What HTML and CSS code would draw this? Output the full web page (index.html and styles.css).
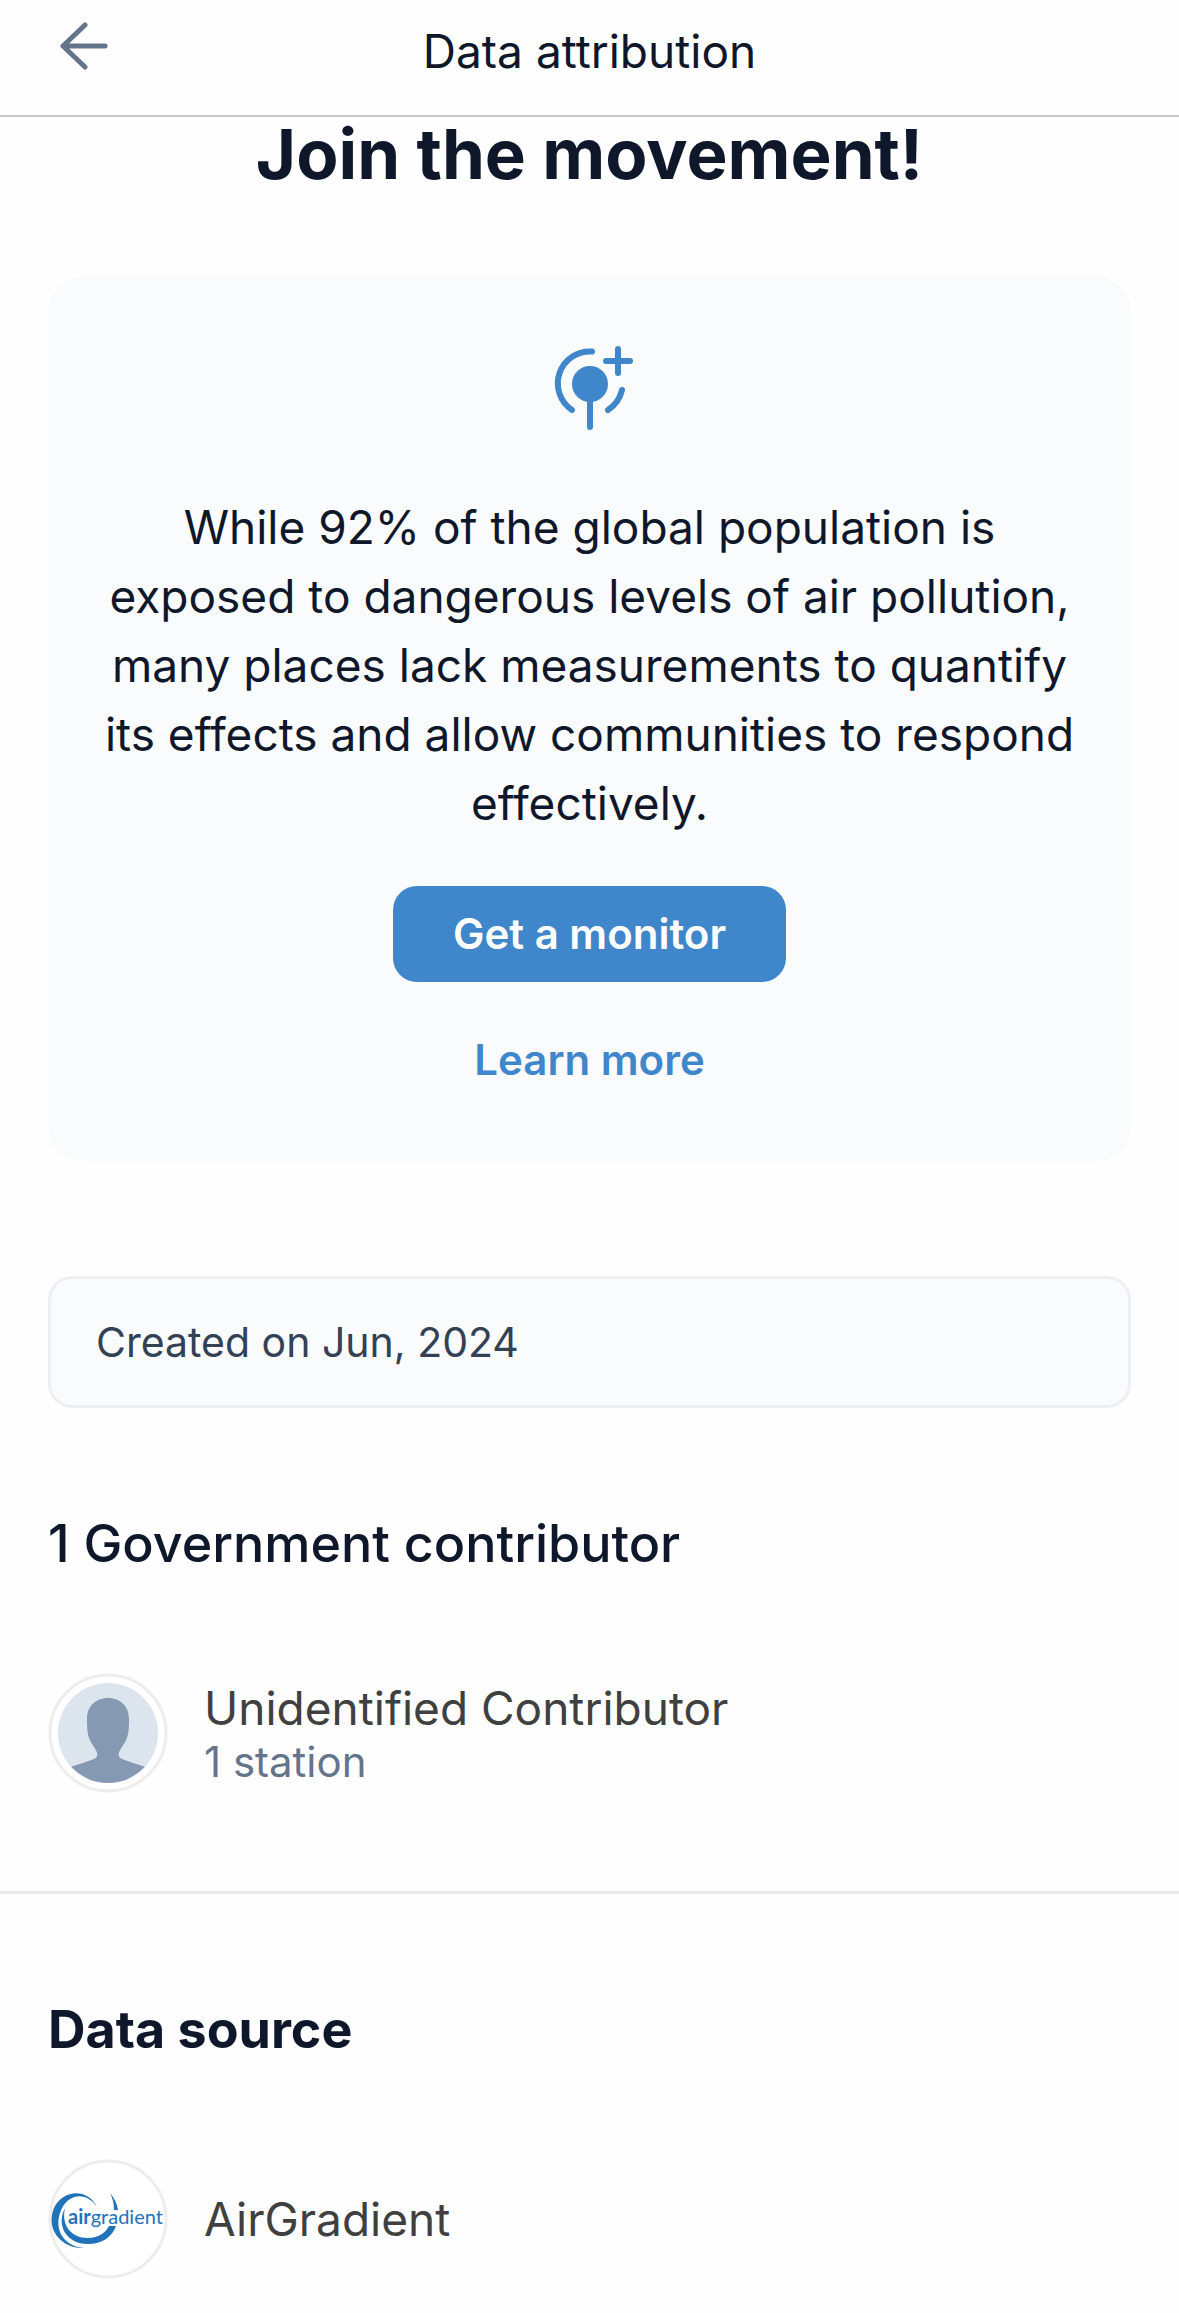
FILE: index.html
```html
<!DOCTYPE html>
<html lang="en">
<head>
<meta charset="utf-8">
<meta name="viewport" content="width=device-width">
<title>Data attribution</title>
<link rel="stylesheet" href="styles.css">
</head>
<body>
<header class="topbar">
  <button class="back" type="button" aria-label="Back">
    <svg viewBox="0 0 48 48" width="48" height="48"><path d="M25 3 3 24l22 21M3 24h42"/></svg>
  </button>
  <h1 class="topbar-title">Data attribution</h1>
</header>
<main>
  <section class="join">
    <h2 class="join-title">Join the movement!</h2>
    <div class="card">
      <svg class="sensor" viewBox="0 0 140 130" width="140" height="130" aria-hidden="true">
        <circle cx="70" cy="64" r="15"/>
        <path d="M70 64v43M72 31.500A32 32 0 0 0 52 90M102 70A33 33 0 0 1 88 90M86 41h24M98 29v24"/>
      </svg>
      <p class="card-text">While 92% of the global population is exposed to dangerous levels of air pollution, many places lack measurements to quantify its effects and allow communities to respond effectively.</p>
      <button class="primary" type="button">Get a monitor</button>
      <a class="more" href="#">Learn more</a>
    </div>
  </section>
  <p class="created">Created on Jun, 2024</p>
  <section class="group">
    <h2 class="group-title">1 Government contributor</h2>
    <div class="entry">
      <svg class="avatar" viewBox="0 0 120 120" width="120" height="120" aria-hidden="true">
        <defs><clipPath id="face"><circle cx="60" cy="60" r="50"/></clipPath></defs>
        <circle class="ring" cx="60" cy="60" r="58"/>
        <g clip-path="url(#face)">
          <path fill="#dce4ed" d="M0 0h120v120H0z"/>
          <path fill="#8599b2" d="M60 25c13 0 21 9 21 21 0 15-1 19-7 28-4 6-5 9 0 12 7 3 15 5 24 8v26H22V94c9-3 17-5 24-8 5-3 4-6 0-12-6-9-7-13-7-28 0-12 8-21 21-21z"/>
        </g>
      </svg>
      <div class="entry-text">
        <span class="name">Unidentified Contributor</span>
        <span class="count">1 station</span>
      </div>
    </div>
  </section>
  <section class="group source">
    <h2 class="group-title strong">Data source</h2>
    <div class="entry">
      <svg class="avatar" viewBox="0 0 120 120" width="120" height="120" role="img" aria-label="airgradient">
        <circle class="ring" cx="60" cy="60" r="58"/>
        <g fill="#2173b9">
          <path d="M49 48C40 29 15 30 6 49-3 71 14 90 37 89 17 88 6 72 12 54 18 35 38 31 49 48z"/>
          <path d="M17 49C8 66 18 85 40 85c14 0 24-7 28-18h-7C57 75 49 79 40 79 23 79 13 66 17 49z"/>
          <path d="M62 34c3 6 4 11 4 17h4c-1-7-4-12-8-17z"/>
        </g>
        <text class="logo-text" x="20" y="65"><tspan class="logo-bold">air</tspan>gradient</text>
      </svg>
      <div class="entry-text"><span class="name">AirGradient</span></div>
    </div>
  </section>
</main>
</body>
</html>
```
FILE: styles.css
```css
* { box-sizing: border-box; }
body {
  margin: 0;
  background: #fefefe;
  color: #0f172a;
  font-family: Inter, "Liberation Sans", sans-serif;
}
h1, h2, p { margin: 0; }
button { border: 0; font: inherit; cursor: pointer; }
svg { display: block; flex: none; }

.topbar {
  display: grid;
  grid-template-columns: 48px 1fr 48px;
  align-items: start;
  padding: 22px 60px 35px;
  border-bottom: 2px solid #c8c8c8;
}
.back { padding: 0; background: none; }
.back svg { fill: none; stroke: #64748b; stroke-width: 5; stroke-linecap: round; stroke-linejoin: round; }
.topbar-title { font-size: 46px; line-height: 58px; font-weight: 400; text-align: center; }

.join { padding: 0 48px; }
.join-title { padding: 0 0 84px; font-size: 69px; line-height: 75px; font-weight: 700; text-align: center; }
.card {
  display: flex;
  flex-direction: column;
  align-items: center;
  padding: 44px 48px 72px;
  border-radius: 36px;
  background: #fafbfd;
}
.sensor { fill: #3f87ca; stroke: #3f87ca; stroke-width: 6; stroke-linecap: round; }
.sensor path { fill: none; }
.card-text { margin-top: 43px; font-size: 46px; line-height: 69px; text-align: center; }
.primary {
  margin-top: 48px;
  padding: 18px 60px;
  border-radius: 24px;
  background: #3f87ca;
  color: #fff;
  font-size: 42px;
  line-height: 60px;
  font-weight: 600;
}
.more { margin-top: 48px; color: #3f87ca; font-size: 42px; line-height: 60px; font-weight: 600; text-decoration: none; }

.created {
  margin: 114px 48px 0;
  padding: 33px 45px;
  border: 3px solid #edeff2;
  border-radius: 24px;
  background: #fafbfd;
  color: #334155;
  font-size: 41px;
  line-height: 60px;
}

.group { padding: 97px 48px 98px; }
.group-title { font-size: 52px; line-height: 78px; font-weight: 500; }
.strong { font-weight: 700; }
.entry { display: flex; align-items: center; gap: 36px; margin-top: 90px; }
.ring { fill: #fff; stroke: #ededee; stroke-width: 3; }
.entry-text { display: flex; flex-direction: column; }
.name { color: #404040; font-size: 46px; line-height: 58px; }
.count { color: #64748b; font-size: 42px; line-height: 50px; }
.source { border-top: 3px solid #e8e8e9; padding-bottom: 32px; }
.logo-text { fill: #2173b9; font-family: Lato, "Noto Sans", sans-serif; font-size: 20px; }
.logo-bold { font-weight: 700; }
```
